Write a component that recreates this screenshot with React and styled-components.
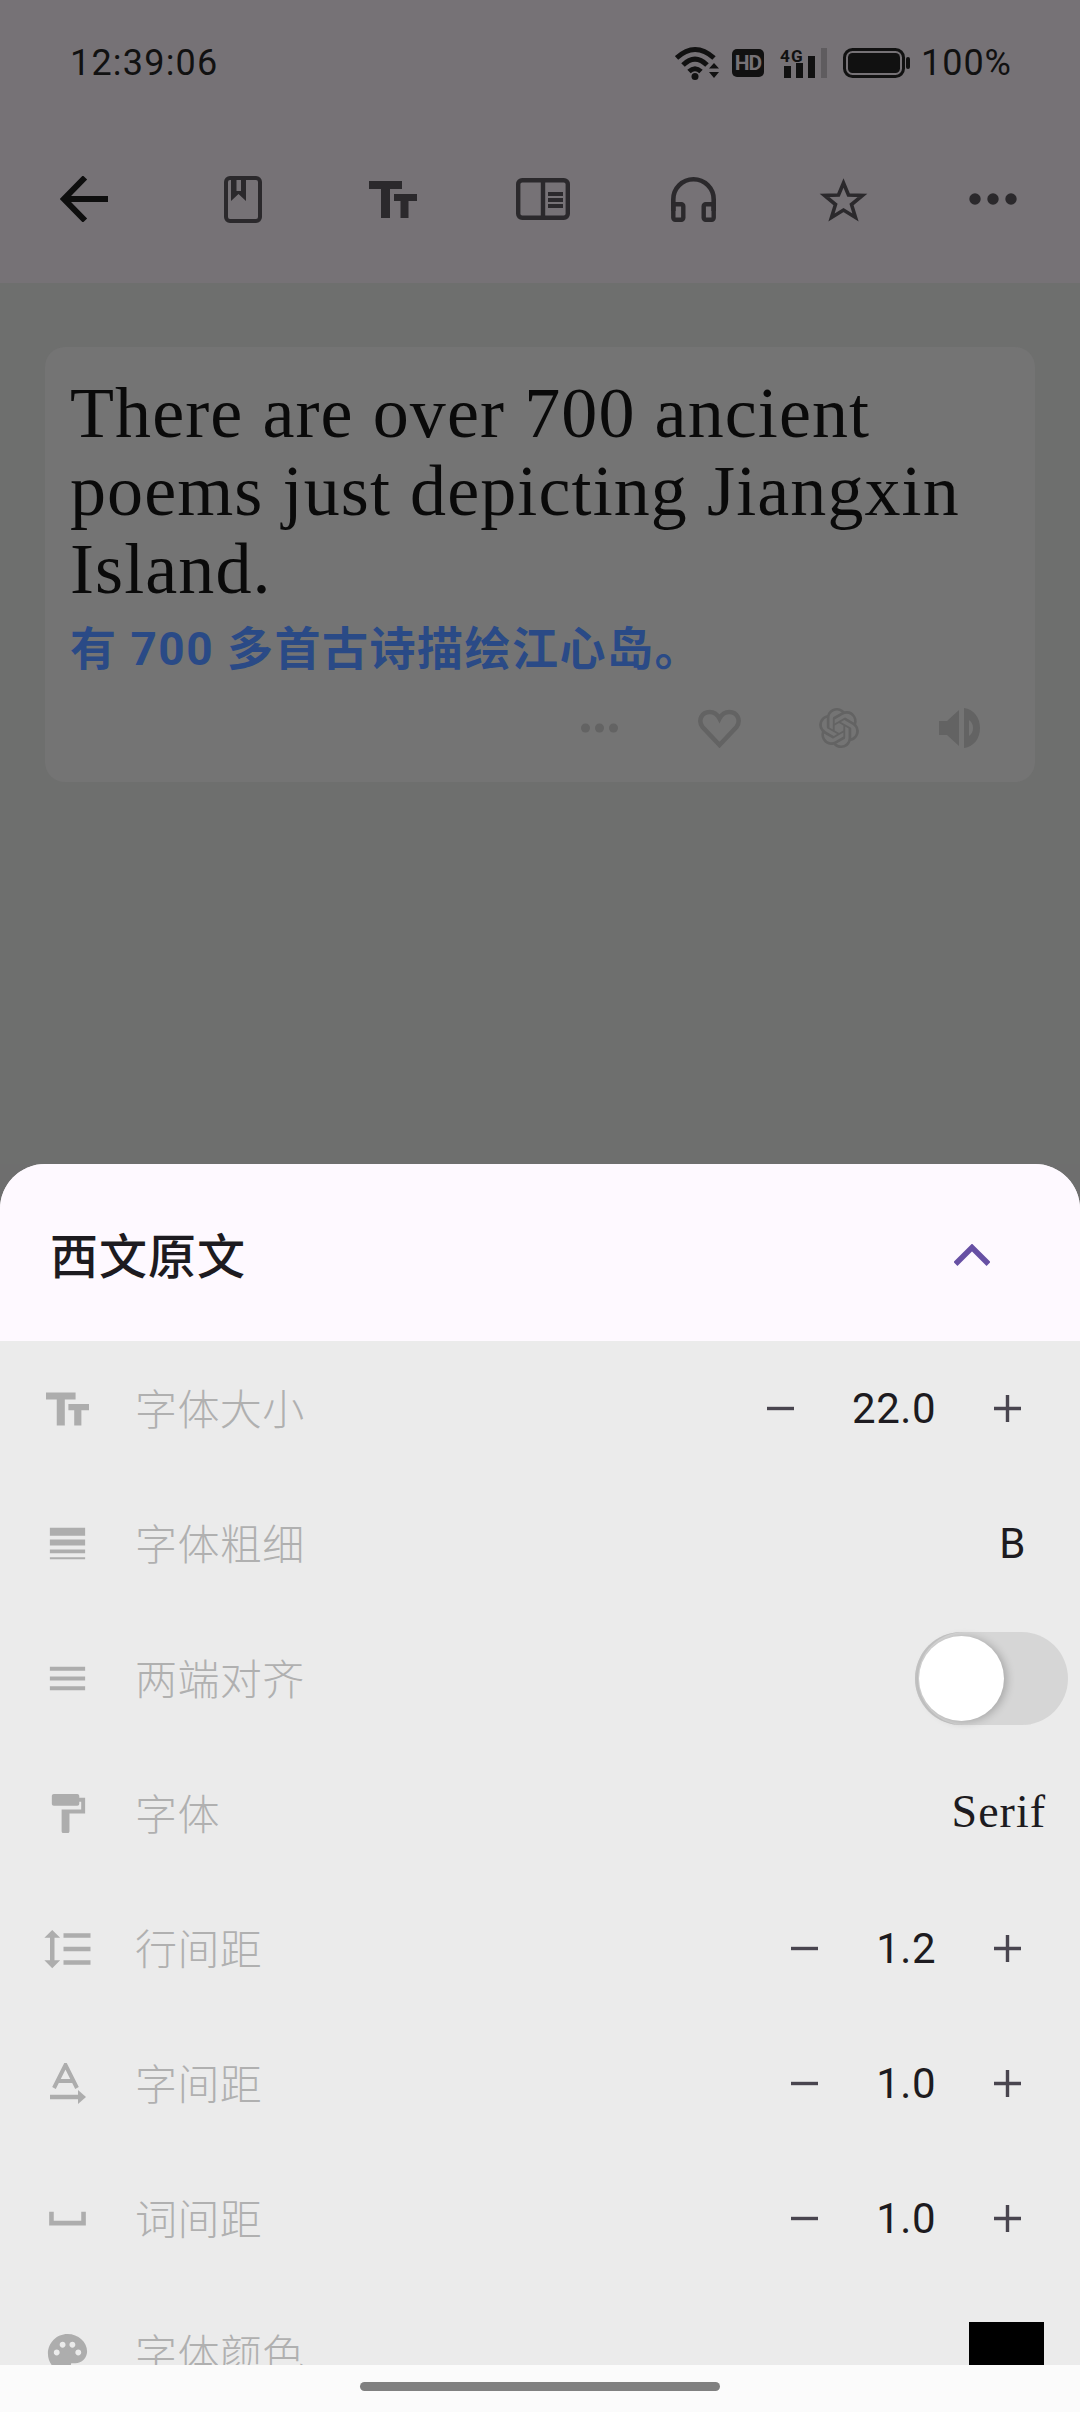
import React from "react";
import styled, { createGlobalStyle } from "styled-components";
import { MdFormatLineSpacing, MdFormatPaint, MdLineWeight, MdMenu, MdPalette, MdSpaceBar } from "react-icons/md";
import { SiOpenai } from "react-icons/si";

const Global = createGlobalStyle`
  html, body { margin: 0; padding: 0; background: #6e6e6e; }
  * { box-sizing: border-box; }
  body { font-family: Roboto, "Noto Sans CJK SC", sans-serif; }
`;

const Screen = styled.div`
  width: 1080px; height: 2412px; display: flex; flex-direction: column; overflow: hidden;
`;
const TopBar = styled.header`
  height: 283px; flex: none; background: #767276; display: flex; flex-direction: column;
`;
const StatusBar = styled.div`
  height: 115px; padding: 10px 68px 0 70px; display: flex; align-items: center; justify-content: space-between;
  color: #111; font-size: 36px; letter-spacing: 1.2px;
`;
const StatusRight = styled.div`
  display: flex; align-items: center;
`;
const StatusIcon = styled.svg`
  display: block; flex: none; margin-right: ${p => p.$gap}px;
`;
const HdBadge = styled.span`
  width: 32px; height: 28px; margin-right: 16px; border-radius: 5px; background: #111; color: #767276;
  font: 700 21px/28px Roboto, sans-serif; letter-spacing: -1px; text-align: center;
`;
const Battery = styled.span`
  letter-spacing: 1px;
`;
const Toolbar = styled.nav`
  height: 168px; padding-right: 12px; display: grid; grid-template-columns: 168px repeat(6, 150px); align-items: center; justify-items: center;
`;
const ToolIcon = styled.svg`
  display: block; color: #2b292c;
`;
const Content = styled.main`
  height: 881px; flex: none; padding: 64px 45px 0; background: #6e6f6e;
`;
const Card = styled.section`
  height: 435px; padding: 27px 16px 0 25px; border-radius: 20px; background: #747474; display: flex; flex-direction: column;
`;
const Sentence = styled.p`
  margin: 0; font: 400 72px/78px "Liberation Serif", serif; letter-spacing: 1.1px; color: #0a0a0a;
`;
const Translation = styled.p`
  margin: 5px 0 0; font: 700 46px/72px Roboto, "Noto Sans CJK SC", sans-serif; letter-spacing: 1.5px; color: #2a4a86;
`;
const Actions = styled.div`
  display: grid; grid-template-columns: repeat(4, 120px); justify-content: end; justify-items: center; align-items: center;
  height: 44px; margin-top: 21px; color: #636363;
`;
const Sheet = styled.section`
  flex: 1; min-height: 0; overflow: hidden; background: #ebebeb; border-radius: 45px 45px 0 0;
`;
const SheetHeader = styled.div`
  height: 177px; padding: 0 90px 0 50px; background: #fef9ff; display: flex; align-items: center; justify-content: space-between;
`;
const SheetTitle = styled.h2`
  margin: 0; font: 500 48px/1 "Noto Sans CJK SC", sans-serif; color: #1d1b20; letter-spacing: 1px;
`;
const Chevron = styled.svg`
  display: block; margin-top: 4px;
`;
const Row = styled.div`
  height: 135px; display: flex; align-items: center; padding-right: ${p => p.$end ?? 33}px;
`;
const IconSlot = styled.div`
  width: 135px; flex: none; display: flex; justify-content: center; color: #adadad;
`;
const Label = styled.span`
  flex: 1; margin-top: -4px; font: 300 42px/1 "Noto Sans CJK SC", sans-serif; letter-spacing: .4px; color: #b0b0b0;
`;
const Stepper = styled.div`
  display: flex; align-items: center; gap: 58px; margin-right: 26px;
`;
const StepGlyph = styled.svg`
  display: block; color: #49454f;
`;
const Value = styled.span`
  font: 400 42px/1 Roboto, sans-serif; letter-spacing: .5px; color: #1d1b20;
`;
const BoldValue = styled(Value)`
  margin-right: 21px;
`;
const SerifValue = styled.span`
  margin-top: -4px; margin-right: 1px; font: 400 46px/1 "Liberation Serif", serif; letter-spacing: 1px; color: #1d1b20;
`;
const Track = styled.div`
  width: 153px; height: 93px; margin-right: -21px; border-radius: 47px; background: #d6d6d6; padding: 4px; display: flex;
  box-shadow: inset 3px 0 0 #c4c4c4;
`;
const Thumb = styled.div`
  width: 85px; height: 85px; border-radius: 50%; background: #fff; box-shadow: 3px 1px 8px rgba(0,0,0,.22);
`;
const Swatch = styled.div`
  width: 75px; height: 63px; background: #000;
`;
const NavBar = styled.div`
  height: 47px; flex: none; background: #fbfbfb; padding-top: 17px; display: flex; justify-content: center; align-items: flex-start;
`;
const Handle = styled.div`
  width: 360px; height: 9px; border-radius: 5px; background: #808080;
`;

const Tt = ({ w = 48, h = 37 }) => (
  <svg width={w} height={h} viewBox="0 0 48 37" fill="currentColor" style={{ display: "block" }}>
    <path d="M0 0h33v8H21v29h-9V8H0z" />
    <path d="M25 13h23v7h-8.500v17h-8V20H25z" />
  </svg>
);

const Minus = () => (
  <StepGlyph width="27" height="27" viewBox="0 0 27 27"><path d="M0 13.5h27" stroke="currentColor" strokeWidth="3.4" /></StepGlyph>
);
const Plus = () => (
  <StepGlyph width="27" height="27" viewBox="0 0 27 27"><path d="M0 13.5h27M13.5 0v27" stroke="currentColor" strokeWidth="3.4" /></StepGlyph>
);
const Step = ({ value }) => (
  <Stepper><Minus /><Value>{value}</Value><Plus /></Stepper>
);

const LetterSpace = () => (
  <svg width="36" height="41" viewBox="0 0 36 41" fill="none" stroke="currentColor" style={{ display: "block" }}>
    <path d="M4 25 15.5 2 27 25M8 18h15" strokeWidth="4" />
    <path d="M0 34h30" strokeWidth="4.5" />
    <path d="M28 27l8 7-8 7z" fill="currentColor" stroke="none" />
  </svg>
);

export default function App() {
  return (
    <Screen>
      <Global />
      <TopBar>
        <StatusBar>
          <span>12:39:06</span>
          <StatusRight>
            <StatusIcon $gap={12} width="45" height="34" viewBox="0 0 45 34" fill="none" stroke="#111">
              <path d="M1.5 12Q20-5 39 12M8 19Q20 7 32 19M14 25.5Q20 20 26 25.5" strokeWidth="5" />
              <circle cx="20" cy="30.500" r="3.500" fill="#111" stroke="none" />
              <path d="M34 22.500l5-5.500 5 5.500zM34 26h10l-5 6z" fill="#111" stroke="none" />
            </StatusIcon>
            <HdBadge>HD</HdBadge>
            <StatusIcon $gap={16} width="47" height="32" viewBox="0 0 47 32" fill="#111">
              <text x="0" y="15" fontFamily="Roboto, sans-serif" fontWeight="700" fontSize="17" textLength="24" lengthAdjust="spacingAndGlyphs">4G</text>
              <rect x="4" y="19" width="7" height="12" />
              <rect x="16" y="16" width="7" height="15" />
              <rect x="28" y="9" width="7" height="22" />
              <rect x="41" y="1" width="6" height="30" fill="#5f5c5f" />
            </StatusIcon>
            <StatusIcon $gap={11} width="67" height="30" viewBox="0 0 67 30" fill="none">
              <rect x="1.500" y="1.500" width="59" height="27" rx="8" stroke="#111" strokeWidth="3" />
              <rect x="5" y="5" width="52" height="20" rx="4.500" fill="#111" />
              <rect x="63" y="9" width="4" height="12" rx="2" fill="#111" />
            </StatusIcon>
            <Battery>100%</Battery>
          </StatusRight>
        </StatusBar>
        <Toolbar>
          <ToolIcon width="48" height="46" viewBox="0 0 48 46" fill="none" stroke="#0e0e0e" strokeWidth="6" style={{ color: "#0e0e0e" }}>
            <path d="M48 23H6M25 1.500 4 23l21 21.500" />
          </ToolIcon>
          <ToolIcon width="38" height="47" viewBox="0 0 38 47" fill="none" stroke="currentColor">
            <rect x="2" y="2" width="34" height="43" rx="4" strokeWidth="4" />
            <path d="M7 2h15v23l-7.500-7L7 25z" fill="currentColor" stroke="none" />
            <rect x="12.500" y="4" width="4.500" height="11" fill="#767276" stroke="none" />
          </ToolIcon>
          <ToolIcon as="div"><Tt /></ToolIcon>
          <ToolIcon width="54" height="42" viewBox="0 0 54 42" fill="none" stroke="currentColor">
            <rect x="2.200" y="2.200" width="49.600" height="37.600" rx="4" strokeWidth="4.400" />
            <path d="M27 3v36" strokeWidth="4.400" />
            <path d="M32 16h15M32 22h15M32 28h15" strokeWidth="3.800" />
          </ToolIcon>
          <ToolIcon width="45" height="45" viewBox="0 0 45 45" fill="none" stroke="currentColor">
            <path d="M2.300 34V22.500a20.200 20.200 0 0 1 40.400 0V34" strokeWidth="4.600" />
            <rect x="2.300" y="27.300" width="10" height="15.400" rx="2" strokeWidth="4.400" />
            <rect x="32.700" y="27.300" width="10" height="15.400" rx="2" strokeWidth="4.400" />
          </ToolIcon>
          <ToolIcon width="49" height="46" viewBox="0 0 49 46" fill="none" stroke="currentColor">
            <path d="M24.500 7 29.500 19 43.500 19.500 32.500 28.500 36.500 41.500 24.500 34 12.500 41.500 16.500 28.500 5.500 19.500 19.500 19Z" strokeWidth="3.600" strokeMiterlimit="10" />
          </ToolIcon>
          <ToolIcon width="48" height="12" viewBox="0 0 48 12" fill="currentColor">
            <circle cx="6" cy="6" r="5.700" /><circle cx="24" cy="6" r="5.700" /><circle cx="42" cy="6" r="5.700" />
          </ToolIcon>
        </Toolbar>
      </TopBar>

      <Content>
        <Card>
          <Sentence>There are over 700 ancient poems just depicting Jiangxin Island.</Sentence>
          <Translation>有 700 多首古诗描绘江心岛。</Translation>
          <Actions>
            <svg width="37" height="10" viewBox="0 0 37 10" fill="currentColor">
              <circle cx="4.500" cy="5" r="4.500" /><circle cx="18.500" cy="5" r="4.500" /><circle cx="32.500" cy="5" r="4.500" />
            </svg>
            <svg width="43" height="39" viewBox="0 0 43 39" fill="none" stroke="currentColor" strokeWidth="4.500">
              <path d="M21.500 36 4.500 18C-.5 11 4 3 11.500 3 16 3 19.500 5.500 21.500 9.500 23.500 5.500 27 3 31.500 3 39 3 43.500 11 38.500 18Z" />
            </svg>
            <SiOpenai size={40} />
            <svg width="41" height="40" viewBox="0 0 41 40" fill="currentColor">
              <path d="M0 13h8L20 2v36L8 27H0z" />
              <path fillRule="evenodd" d="M25 0C35 1 41 10 41 20 41 30 35 39 25 40ZM30 12C33 14 34 17 34 20 34 23 33 26 30 28Z" />
            </svg>
          </Actions>
        </Card>
      </Content>

      <Sheet>
        <SheetHeader>
          <SheetTitle>西文原文</SheetTitle>
          <Chevron width="36" height="22" viewBox="0 0 36 22" fill="none" stroke="#6750a4" strokeWidth="5.500">
            <path d="M1.500 20 18 3.500 34.500 20" />
          </Chevron>
        </SheetHeader>
        <Row>
          <IconSlot><Tt w={43} h={34} /></IconSlot>
          <Label>字体大小</Label>
          <Step value="22.0" />
        </Row>
        <Row>
          <IconSlot><MdLineWeight size={47} /></IconSlot>
          <Label>字体粗细</Label>
          <BoldValue>B</BoldValue>
        </Row>
        <Row>
          <IconSlot><MdMenu size={47} /></IconSlot>
          <Label>两端对齐</Label>
          <Track><Thumb /></Track>
        </Row>
        <Row>
          <IconSlot><MdFormatPaint size={47} /></IconSlot>
          <Label>字体</Label>
          <SerifValue>Serif</SerifValue>
        </Row>
        <Row>
          <IconSlot><MdFormatLineSpacing size={54} /></IconSlot>
          <Label>行间距</Label>
          <Step value="1.2" />
        </Row>
        <Row>
          <IconSlot><LetterSpace /></IconSlot>
          <Label>字间距</Label>
          <Step value="1.0" />
        </Row>
        <Row>
          <IconSlot><MdSpaceBar size={55} /></IconSlot>
          <Label>词间距</Label>
          <Step value="1.0" />
        </Row>
        <Row $end={36}>
          <IconSlot><MdPalette size={47} /></IconSlot>
          <Label>字体颜色</Label>
          <Swatch />
        </Row>
      </Sheet>
      <NavBar><Handle /></NavBar>
    </Screen>
  );
}
